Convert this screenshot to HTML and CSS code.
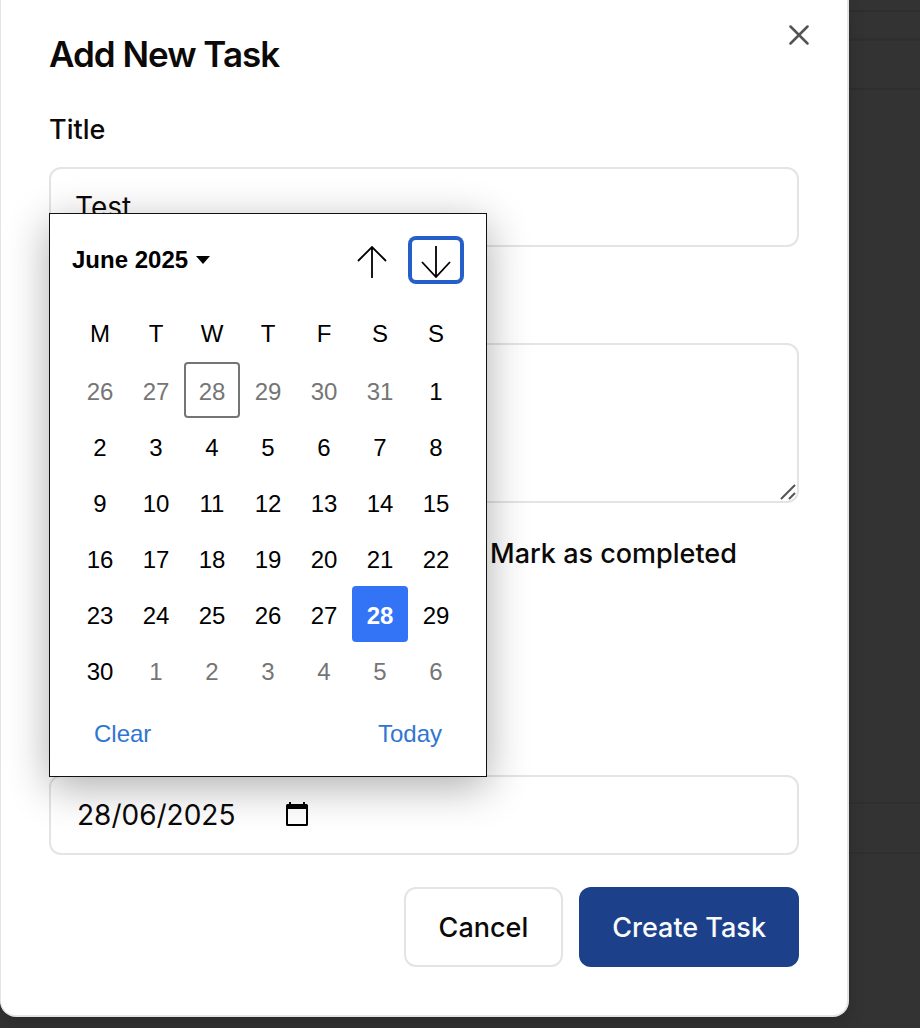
FILE: index.html
```html
<!DOCTYPE html>
<html lang="en">
<head>
<meta charset="utf-8">
<meta name="viewport" content="width=device-width, initial-scale=1">
<title>Add New Task</title>
<link rel="stylesheet" href="styles.css">
</head>
<body>
<main class="dialog" role="dialog" aria-labelledby="dialog-title">
  <button class="close" type="button" aria-label="Close">
    <svg width="20" height="20" viewBox="0 0 20 20" fill="none" stroke="currentColor" stroke-width="2.5" stroke-linecap="round"><path d="M1.5 1.5l17 17M18.5 1.5l-17 17"/></svg>
  </button>
  <h1 class="dialog-title" id="dialog-title">Add New Task</h1>
  <form class="form">
    <label class="label" for="title">Title</label>
    <input class="control" id="title" type="text" value="Test">
    <div class="notes">
      <textarea class="control control-area" aria-label="Task notes"></textarea>
      <svg class="grip" width="16" height="16" viewBox="0 0 16 16" fill="none" stroke="#555" stroke-width="2"><path d="M1 15L15 1M9 15l6-6"/></svg>
    </div>
    <div class="options">
      <label class="check"><input class="check-box" type="checkbox"><span>Mark as completed</span></label>
    </div>
    <div class="date-field">
      <input class="control control-date" id="date" type="text" value="28/06/2025" aria-label="Date">
      <button class="date-open" type="button" aria-label="Open calendar">
        <svg width="22" height="24" viewBox="0 0 22 24"><path fill="#000" fill-rule="evenodd" d="M3 0h2v2h12V0h2v2h1.500a1.500 1.500 0 0 1 1.500 1.500V22.500a1.500 1.500 0 0 1-1.500 1.500H1.500a1.500 1.500 0 0 1-1.500-1.500V3.500a1.500 1.500 0 0 1 1.500-1.500H3zM2 7V22h18V7z"/></svg>
      </button>
      <section class="calendar" aria-label="Calendar">
        <div class="calendar-head">
          <button class="month" type="button">June 2025
            <svg width="14" height="8" viewBox="0 0 14 8"><path d="M0 0h14L7 8z"/></svg>
          </button>
          <button class="step" type="button" aria-label="Previous month">
            <svg width="32" height="32" viewBox="0 0 32 32" fill="none" stroke="#000" stroke-width="1.8"><path d="M16 32V1M2 15L16 1l14 14"/></svg>
          </button>
          <button class="step step-focus" type="button" aria-label="Next month">
            <svg width="32" height="32" viewBox="0 0 32 32" fill="none" stroke="#000" stroke-width="1.8"><path d="M16 0v31M2 16l14 15 14-15"/></svg>
          </button>
        </div>
        <table class="days">
          <thead>
            <tr><th>M</th><th>T</th><th>W</th><th>T</th><th>F</th><th>S</th><th>S</th></tr>
          </thead>
          <tbody>
            <tr><td class="other">26</td><td class="other">27</td><td class="other today">28</td><td class="other">29</td><td class="other">30</td><td class="other">31</td><td>1</td></tr>
            <tr><td>2</td><td>3</td><td>4</td><td>5</td><td>6</td><td>7</td><td>8</td></tr>
            <tr><td>9</td><td>10</td><td>11</td><td>12</td><td>13</td><td>14</td><td>15</td></tr>
            <tr><td>16</td><td>17</td><td>18</td><td>19</td><td>20</td><td>21</td><td>22</td></tr>
            <tr><td>23</td><td>24</td><td>25</td><td>26</td><td>27</td><td class="selected">28</td><td>29</td></tr>
            <tr><td>30</td><td class="other">1</td><td class="other">2</td><td class="other">3</td><td class="other">4</td><td class="other">5</td><td class="other">6</td></tr>
          </tbody>
        </table>
        <div class="calendar-foot">
          <button class="text-button" type="button">Clear</button>
          <button class="text-button" type="button">Today</button>
        </div>
      </section>
    </div>
    <div class="actions">
      <button class="button" type="button">Cancel</button>
      <button class="button button-primary" type="submit">Create Task</button>
    </div>
  </form>
</main>
</body>
</html>
```

FILE: styles.css
```css
* {
  box-sizing: border-box;
}

body {
  margin: 0;
  padding: 0 71px 11px 0;
  min-height: 100vh;
  font-family: Inter, "Liberation Sans", sans-serif;
  font-size: 27px;
  color: #0c0a09;
  background: #333 linear-gradient(
    #333 10px, #2e2e2e 10px, #2e2e2e 12px,
    #333 12px, #333 38px, #2f2f2f 38px, #2f2f2f 41px,
    #333 41px, #333 88px, #2e2e2e 88px, #2e2e2e 90px,
    #333 90px, #333 802px, #2f2f2f 802px, #2f2f2f 804px,
    #333 804px, #333 852px, #2f2f2f 852px, #2f2f2f 854px, #333 854px) no-repeat;
}

button,
input,
textarea {
  font: inherit;
  color: inherit;
}

button {
  padding: 0;
  border: 0;
  background: none;
  cursor: pointer;
}

svg {
  display: block;
}

.dialog {
  position: relative;
  padding: 32px 48px 48px;
  border: 2px solid #e4e4e4;
  border-top: 0;
  border-left-width: 1px;
  border-radius: 0 0 16px 16px;
  background: #fff;
  box-shadow: 0 8px 16px rgba(0, 0, 0, 0.15);
}

.close {
  position: absolute;
  top: 25px;
  right: 38px;
  color: #555452;
}

.dialog-title {
  margin: 0 0 34px;
  font-size: 35px;
  line-height: 44px;
  font-weight: 600;
  letter-spacing: -1px;
}

.form {
  display: flex;
  flex-direction: column;
}

.label {
  margin-bottom: 18px;
  line-height: 39px;
  font-weight: 500;
}

.control {
  display: block;
  width: 100%;
  height: 80px;
  padding: 0 24px;
  border: 2px solid #e4e4e4;
  border-radius: 12px;
  background: #fff;
  font-size: 28px;
  outline: 0;
}

.control-date {
  padding: 0 26px;
}

.control-area {
  height: 160px;
  padding: 16px 24px;
  resize: none;
}

.notes {
  position: relative;
  margin-top: 96px;
}

.grip {
  position: absolute;
  right: 3px;
  bottom: 3px;
}

.options {
  display: grid;
  grid-template-columns: 1fr 1fr;
  gap: 32px;
  margin: 32px 0 204px;
}

.check {
  grid-column: 2;
  display: flex;
  align-items: center;
  gap: 18px;
  height: 36px;
  font-weight: 500;
  white-space: nowrap;
}

.check-box {
  width: 32px;
  height: 32px;
  margin: 0;
}

.date-field {
  position: relative;
}

.date-open {
  position: absolute;
  left: 237px;
  top: 27px;
}

.calendar {
  position: absolute;
  left: 0;
  bottom: 78px;
  width: 438px;
  padding: 22px;
  border: 1px solid #111;
  background: #fff;
  color: #000;
  font-family: "Liberation Sans", Arial, sans-serif;
  font-size: 24px;
  box-shadow: 0 10px 40px rgba(0, 0, 0, 0.32);
}

.calendar-head {
  display: flex;
  gap: 8px;
  height: 48px;
  margin-bottom: 22px;
}

.month {
  display: flex;
  align-items: center;
  gap: 8px;
  margin-right: auto;
  font-weight: 700;
}

.step {
  display: flex;
  justify-content: center;
  align-items: center;
  width: 56px;
  padding-top: 4px;
  border-radius: 8px;
}

.step-focus {
  box-shadow: inset 0 0 0 4px #275fc9;
}

.days {
  width: 100%;
  table-layout: fixed;
  border-collapse: separate;
  border-spacing: 0;
}

.days th,
.days td {
  height: 56px;
  padding: 4px 0 0;
  text-align: center;
  font-weight: 400;
}

.days th {
  padding: 0;
}

.days .other {
  color: #757575;
}

.days .today {
  border-radius: 4px;
  box-shadow: inset 0 0 0 2px #757575;
}

.days .selected {
  border-radius: 4px;
  background: #3374f6;
  color: #fff;
  font-weight: 700;
}

.calendar-foot {
  display: flex;
  justify-content: space-between;
  padding: 22px 22px 6px;
}

.text-button {
  line-height: 28px;
  color: #2f76d2;
}

.actions {
  display: flex;
  justify-content: flex-end;
  gap: 16px;
  margin-top: 32px;
}

.button {
  height: 80px;
  padding: 0 33px;
  border: 2px solid #e4e4e4;
  border-radius: 12px;
  background: #fff;
  font-weight: 500;
}

.button-primary {
  border: 0;
  background: #1d408b;
  color: #f8fafc;
}
```
